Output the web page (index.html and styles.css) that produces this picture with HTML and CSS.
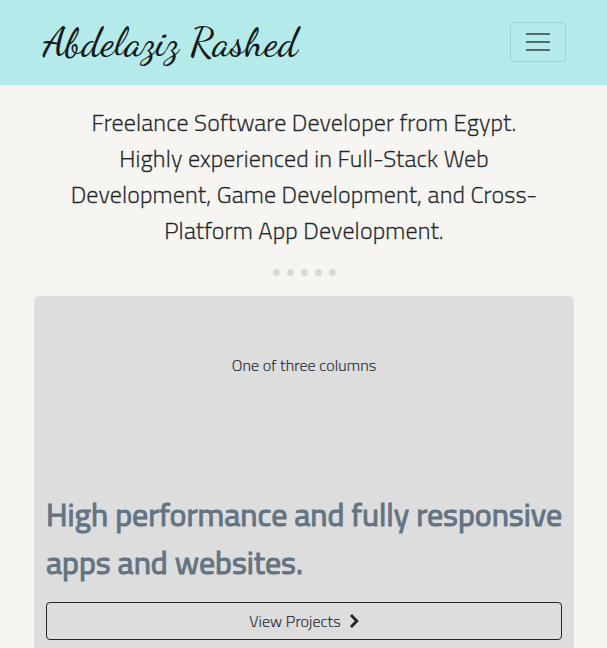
FILE: index.html
```html
<!DOCTYPE html>
<html lang="en">
<head>
<meta charset="utf-8">
<title>Abdelaziz Rashed</title>
<link rel="stylesheet" href="styles.css">
</head>
<body>
<header class="navbar">
  <a class="brand">Abdelaziz Rashed</a>
  <button class="toggler" aria-label="Menu">
    <svg width="30" height="30" viewBox="0 0 30 30"><path d="M3 7h24M3 15h24M3 23h24" fill="none" stroke="#526b6b" stroke-width="2"/></svg>
  </button>
</header>
<main>
  <p class="intro">Freelance Software Developer from Egypt.<br>Highly experienced in Full-Stack Web<br>Development, Game Development, and Cross-<br>Platform App Development.</p>
  <div class="dots"><i></i><i></i><i></i><i></i><i></i></div>
  <section class="card">
    <div class="column">One of three columns</div>
    <h2>High performance and fully responsive<br>apps and websites.</h2>
    <a class="button"><span>View Projects</span><svg width="10" height="16" viewBox="0 0 10 16"><path d="M2 2l5.8 6L2 14" fill="none" stroke="#212529" stroke-width="2.8"/></svg></a>
  </section>
</main>
</body>
</html>
```
FILE: styles.css
```css
* { box-sizing: border-box; }
body {
  margin: 0;
  height: 648px;
  overflow: hidden;
  background: #f6f5f1;
  color: #212529;
  font: 300 16px/24px Cairo, "Titillium Web", Roboto, sans-serif;
  letter-spacing: .09px;
  -webkit-text-stroke: .2px;
}
.navbar {
  display: flex;
  align-items: center;
  justify-content: space-between;
  height: 85px;
  padding: 0 41px 1px 43px;
  background: #b4eae9;
}
.brand {
  font: 500 40px/60px "Dancing Script", "Liberation Serif", cursive;
  letter-spacing: .32px;
  color: #171a1b;
  -webkit-text-stroke: 0;
}
.toggler {
  display: flex;
  align-items: center;
  justify-content: center;
  width: 56px;
  height: 40px;
  padding: 0;
  border: 1px solid #a2d3d3;
  border-radius: 4px;
  background: transparent;
}
main { padding: 20px 33px 0 34px; }
.intro {
  margin: 0;
  font-size: 24px;
  line-height: 36px;
  letter-spacing: .14px;
  -webkit-text-stroke: .3px;
  text-align: center;
  white-space: nowrap;
}
.dots {
  display: flex;
  justify-content: center;
  gap: 7px;
  margin-top: 20px;
}
.dots i {
  width: 7px;
  height: 7px;
  border-radius: 50%;
  background: #d8d8d4;
}
.card {
  height: 352px;
  margin-top: 20px;
  padding: 0 12px;
  border-radius: 5px 5px 0 0;
  background: #ddd;
}
.column {
  height: 194px;
  padding-top: 57px;
  text-align: center;
}
h2 {
  margin: 0;
  font-size: 32px;
  font-weight: 400;
  line-height: 48px;
  letter-spacing: -.04px;
  color: #647382;
  -webkit-text-stroke: 1px #647382;
  white-space: nowrap;
}
.button {
  display: flex;
  align-items: center;
  justify-content: center;
  gap: 8px;
  height: 38px;
  margin-top: 16px;
  border: 1px solid #212529;
  border-radius: 4px;
}
```
